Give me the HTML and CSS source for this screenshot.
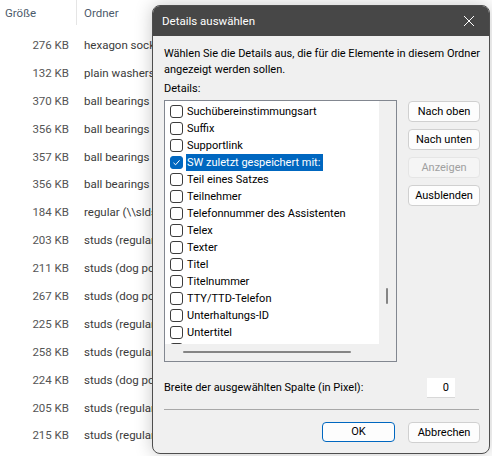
FILE: index.html
```html
<!DOCTYPE html>
<html lang="de">
<head>
<meta charset="utf-8">
<title>Details auswählen</title>
<link rel="stylesheet" href="styles.css">
</head>
<body>
<div class="explorer">
  <div class="head">
    <div class="col-size">Größe</div>
    <div class="col-folder">Ordner</div>
  </div>
  <div class="row"><div class="col-size">276 KB</div><div class="col-folder">hexagon socket head cap screws</div></div>
  <div class="row"><div class="col-size">132 KB</div><div class="col-folder">plain washers</div></div>
  <div class="row"><div class="col-size">370 KB</div><div class="col-folder">ball bearings</div></div>
  <div class="row"><div class="col-size">356 KB</div><div class="col-folder">ball bearings</div></div>
  <div class="row"><div class="col-size">357 KB</div><div class="col-folder">ball bearings</div></div>
  <div class="row"><div class="col-size">356 KB</div><div class="col-folder">ball bearings</div></div>
  <div class="row"><div class="col-size">184 KB</div><div class="col-folder">regular (\\sldserver)</div></div>
  <div class="row"><div class="col-size">203 KB</div><div class="col-folder">studs (regular)</div></div>
  <div class="row"><div class="col-size">211 KB</div><div class="col-folder">studs (dog point)</div></div>
  <div class="row"><div class="col-size">267 KB</div><div class="col-folder">studs (dog point)</div></div>
  <div class="row"><div class="col-size">225 KB</div><div class="col-folder">studs (regular)</div></div>
  <div class="row"><div class="col-size">258 KB</div><div class="col-folder">studs (regular)</div></div>
  <div class="row"><div class="col-size">224 KB</div><div class="col-folder">studs (dog point)</div></div>
  <div class="row"><div class="col-size">205 KB</div><div class="col-folder">studs (regular)</div></div>
  <div class="row"><div class="col-size">215 KB</div><div class="col-folder">studs (regular)</div></div>
</div>

<div class="dialog">
  <div class="titlebar">
    <span class="title">Details auswählen</span>
    <svg class="close" width="12" height="12" viewBox="0 0 12 12"><path d="M1 1 L11 11 M11 1 L1 11" stroke="#ffffff" stroke-width="1" fill="none"/></svg>
  </div>
  <div class="body">
    <p class="intro">Wählen Sie die Details aus, die für die Elemente in diesem Ordner angezeigt werden sollen.</p>
    <div class="label">Details:</div>
    <div class="main">
      <div class="listbox">
        <div class="listarea">
          <div class="items">
            <div class="item"><span class="cb"></span><span class="txt">Suchübereinstimmungsart</span></div>
            <div class="item"><span class="cb"></span><span class="txt">Suffix</span></div>
            <div class="item"><span class="cb"></span><span class="txt">Supportlink</span></div>
            <div class="item selected"><span class="cb checked"><svg width="13" height="13" viewBox="0 0 13 13"><path d="M3.5 6.8 L5.6 8.8 L9.6 4.3" stroke="#ffffff" stroke-width="1" fill="none"/></svg></span><span class="txt">SW zuletzt gespeichert mit:</span></div>
            <div class="item"><span class="cb"></span><span class="txt">Teil eines Satzes</span></div>
            <div class="item"><span class="cb"></span><span class="txt">Teilnehmer</span></div>
            <div class="item"><span class="cb"></span><span class="txt">Telefonnummer des Assistenten</span></div>
            <div class="item"><span class="cb"></span><span class="txt">Telex</span></div>
            <div class="item"><span class="cb"></span><span class="txt">Texter</span></div>
            <div class="item"><span class="cb"></span><span class="txt">Titel</span></div>
            <div class="item"><span class="cb"></span><span class="txt">Titelnummer</span></div>
            <div class="item"><span class="cb"></span><span class="txt">TTY/TTD-Telefon</span></div>
            <div class="item"><span class="cb"></span><span class="txt">Unterhaltungs-ID</span></div>
            <div class="item"><span class="cb"></span><span class="txt">Untertitel</span></div>
            <div class="item"><span class="cb"></span></div>
          </div>
          <div class="vscroll"><div class="vthumb"></div></div>
        </div>
        <div class="hscroll"><div class="hthumb"></div></div>
      </div>
      <div class="buttons">
        <button class="btn">Nach oben</button>
        <button class="btn">Nach unten</button>
        <button class="btn disabled">Anzeigen</button>
        <button class="btn">Ausblenden</button>
      </div>
    </div>
    <div class="widthrow">
      <span>Breite der ausgewählten Spalte (in Pixel):</span>
      <div class="numbox">0</div>
    </div>
    <div class="sep"></div>
    <div class="footer">
      <button class="btn ok">OK</button>
      <button class="btn">Abbrechen</button>
    </div>
  </div>
</div>
</body>
</html>
```
FILE: styles.css
```css
html, body {
  margin: 0;
  padding: 0;
  background: #ffffff;
  width: 492px;
  height: 456px;
  overflow: hidden;
  font-family: Roboto, "Noto Sans", sans-serif;
  font-size: 11px;
}

.explorer {
  position: relative;
}

.head {
  display: flex;
  height: 31px;
  align-items: flex-start;
  color: #4c5a6b;
  font-size: 11.5px;
}
.head .col-size {
  text-align: left;
  padding-left: 5px;
  border-right: 1px solid #e5e5e5;
  height: 25px;
  line-height: 27px;
  box-sizing: border-box;
  padding-right: 0;
}
.head .col-folder {
  line-height: 27px;
  color: #4c5a6b;
}

.col-size {
  width: 77px;
  box-sizing: border-box;
  text-align: right;
  padding-right: 8px;
  white-space: nowrap;
}
.col-folder {
  padding-left: 7px;
  white-space: nowrap;
}

.row {
  display: flex;
  height: 27.9px;
  line-height: 28px;
  color: #3b3b3b;
  font-size: 11.5px;
}
.row .col-size {
  color: #555555;
}

.dialog {
  position: absolute;
  left: 152px;
  top: 5px;
  width: 338px;
  height: 449px;
  box-sizing: border-box;
  border: 1px solid #4e4e4e;
  border-radius: 8px;
  overflow: hidden;
  background: #f0f0f0;
  box-shadow: 0 0 18px rgba(0, 0, 0, 0.22);
  display: flex;
  flex-direction: column;
}

.titlebar {
  height: 30px;
  background: #474747;
  color: #ffffff;
  display: flex;
  align-items: center;
  justify-content: space-between;
  padding: 0 14px 0 9px;
  flex-shrink: 0;
}
.title {
  font-size: 11.5px;
  line-height: 16px;
}
.close {
  display: block;
}

.body {
  padding: 10px 9px 0 11px;
  color: #000000;
  display: flex;
  flex-direction: column;
}

.intro {
  margin: 0;
  line-height: 16px;
  width: 318px;
}
.label {
  margin-top: 3px;
  line-height: 16px;
}

.main {
  margin-top: 3px;
  display: flex;
  gap: 11px;
  align-items: flex-start;
}

.listbox {
  width: 233px;
  height: 262px;
  box-sizing: border-box;
  border: 1px solid #828790;
  background: #f0f0f0;
  display: flex;
  flex-direction: column;
}
.listarea {
  display: flex;
  height: 243px;
}
.items {
  width: 214px;
  background: #ffffff;
  padding-top: 2px;
  overflow: hidden;
  box-sizing: border-box;
}
.item {
  height: 17px;
  display: flex;
  align-items: center;
  padding-left: 5px;
  white-space: nowrap;
}
.cb {
  width: 13px;
  height: 13px;
  box-sizing: border-box;
  border: 1px solid #3c3c3c;
  border-radius: 3px;
  background: #ffffff;
  flex-shrink: 0;
  margin-right: 3px;
  position: relative;
}
.cb.checked {
  background: #0067c0;
  border-color: #0067c0;
}
.cb.checked svg {
  position: absolute;
  left: -1px;
  top: -1px;
}
.txt {
  line-height: 17px;
  padding: 0 1px;
}
.item.selected .txt {
  background: #0067c0;
  color: #ffffff;
  padding-right: 3px;
}

.vscroll {
  width: 17px;
  position: relative;
}
.vthumb {
  position: absolute;
  left: 7px;
  top: 187px;
  width: 2px;
  height: 16px;
  background: #858585;
  border-radius: 1px;
}
.hscroll {
  height: 17px;
  position: relative;
}
.hthumb {
  position: absolute;
  left: 18px;
  top: 7px;
  height: 2px;
  width: 168px;
  background: #858585;
  border-radius: 1px;
}

.buttons {
  display: flex;
  flex-direction: column;
  gap: 7px;
  padding-top: 1px;
}

.btn {
  width: 72px;
  height: 21px;
  box-sizing: border-box;
  border: 1px solid #d0d0d0;
  border-radius: 4px;
  background: #fdfdfd;
  font-family: Roboto, "Noto Sans", sans-serif;
  font-size: 11px;
  color: #000000;
  padding: 0;
  line-height: 18px;
}
.btn.disabled {
  background: #f5f5f5;
  border-color: #e5e5e5;
  color: #a0a0a0;
}
.btn.ok {
  width: 73px;
  height: 20px;
  border-color: #0067c0;
}

.widthrow {
  margin-top: 16px;
  display: flex;
  align-items: center;
  justify-content: space-between;
  padding-right: 25px;
  line-height: 16px;
}
.numbox {
  width: 28px;
  height: 20px;
  box-sizing: border-box;
  background: #ffffff;
  border-bottom: 1px solid #d8d8d8;
  text-align: right;
  padding-right: 6px;
  line-height: 19px;
}

.sep {
  margin-top: 11px;
  height: 1px;
  background: #a8a8a8;
  width: 315px;
}

.footer {
  margin-top: 12px;
  display: flex;
  justify-content: flex-end;
  gap: 13px;
}
```
